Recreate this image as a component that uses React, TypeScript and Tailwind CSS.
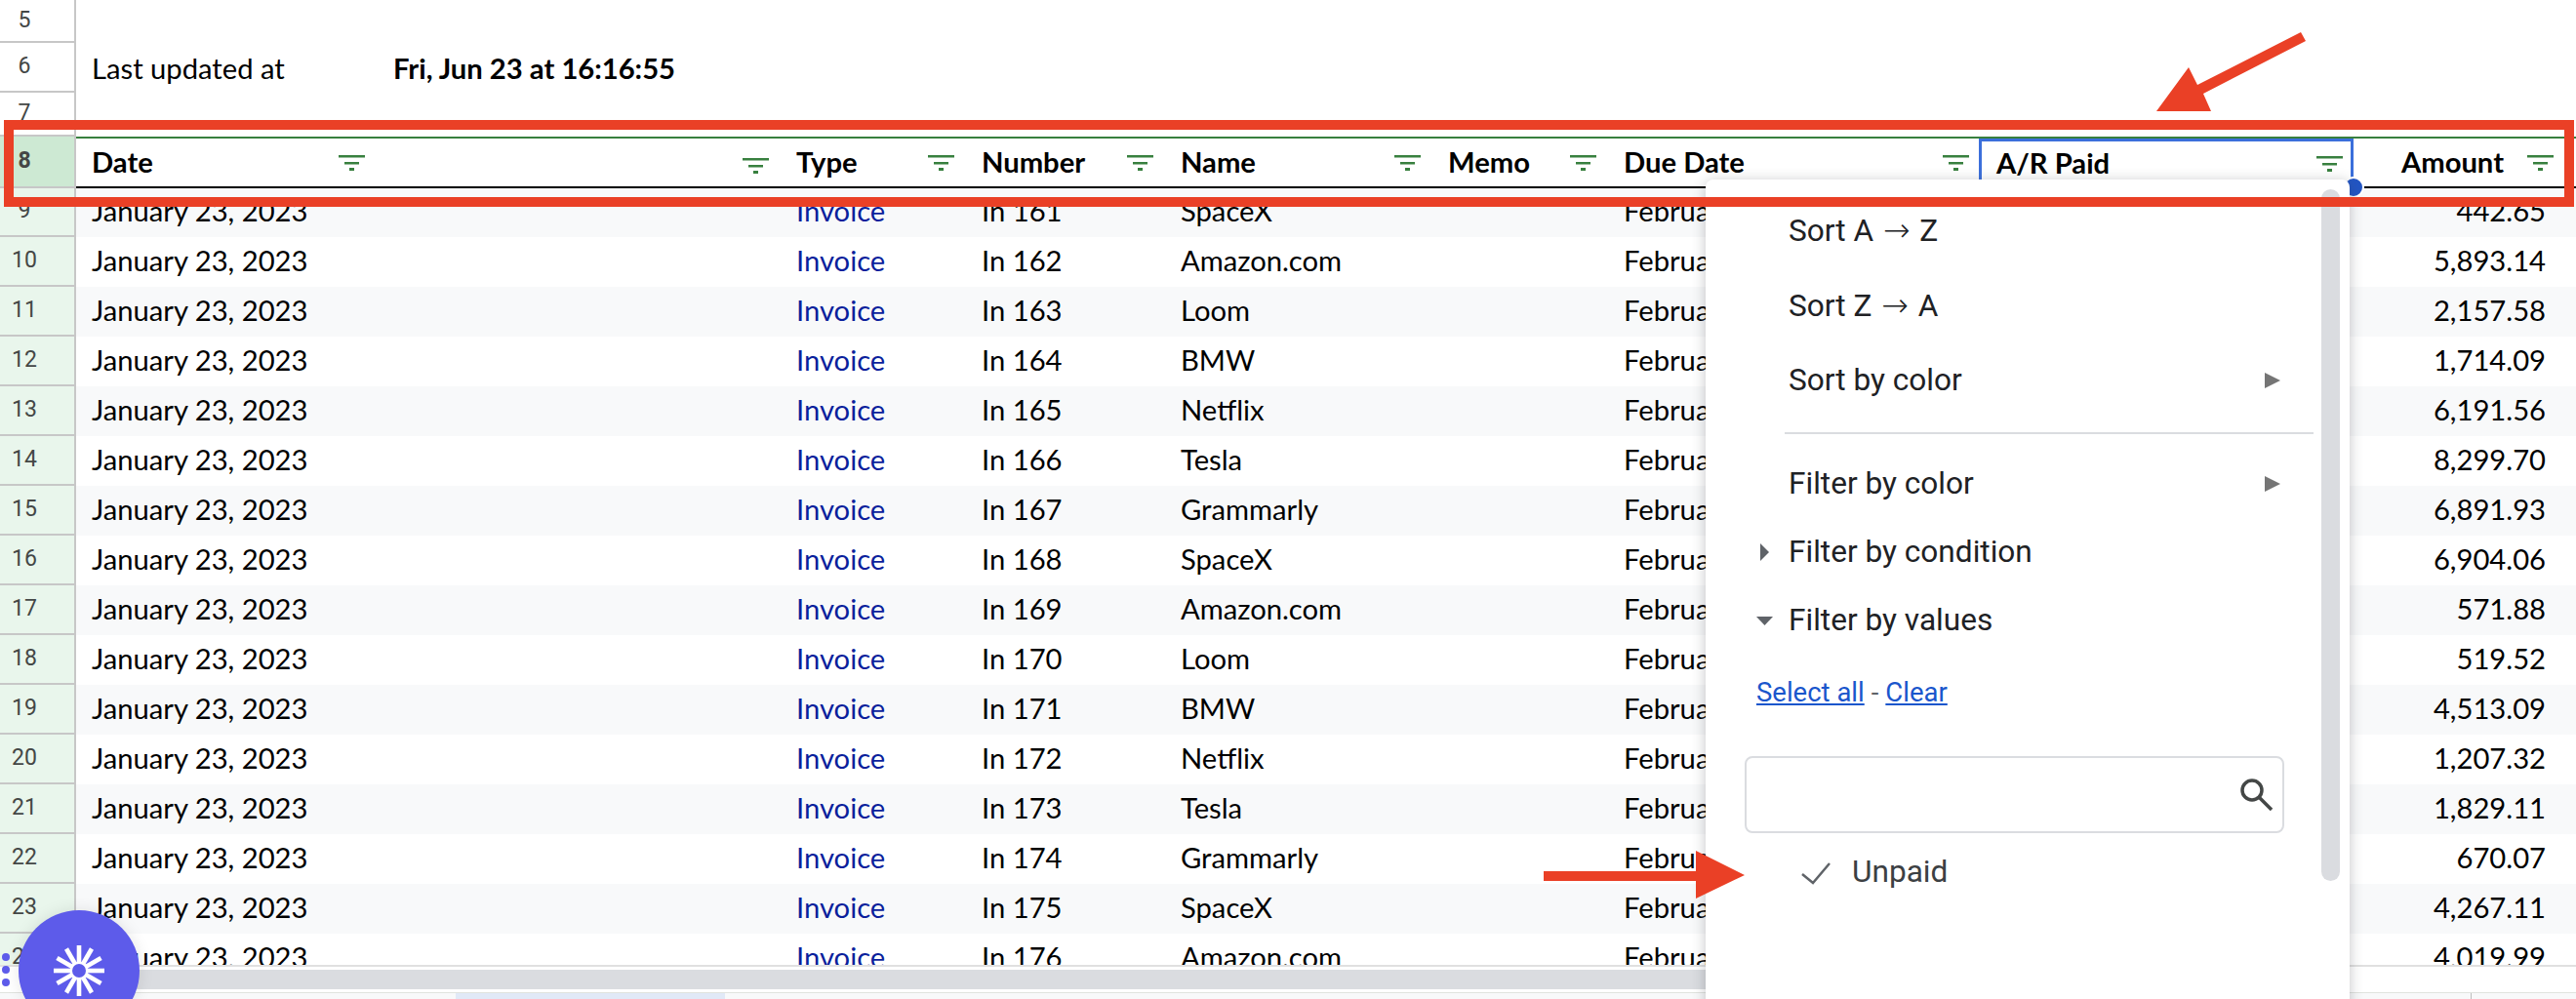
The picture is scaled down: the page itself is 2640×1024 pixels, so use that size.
const cols = "grid grid-cols-[78px_306px_414px_190px_204px_274px_180px_382px_384px_216px_12px]";

const names = ["SpaceX", "Amazon.com", "Loom", "BMW", "Netflix", "Tesla", "Grammarly"];
const amounts = ["442.65", "5,893.14", "2,157.58", "1,714.09", "6,191.56", "8,299.70", "6,891.93", "6,904.06", "571.88", "519.52", "4,513.09", "1,207.32", "1,829.11", "670.07", "4,267.11", "4,019.99"];

function FilterIcon({ className = "" }: { className?: string }) {
  return (
    <svg width="27" height="16" viewBox="0 0 27 16" className={`shrink-0 ${className}`}>
      <rect x="0" y="0" width="27" height="2.5" fill="#38803f" />
      <rect x="6" y="7" width="15" height="2.5" fill="#38803f" />
      <rect x="11" y="13" width="5" height="3" fill="#38803f" />
    </svg>
  );
}

function RowNum({ n, tone = "plain" }: { n: number; tone?: "plain" | "active" | "current" }) {
  const toneClass = tone === "current" ? "bg-[#cde9d3] font-bold" : tone === "active" ? "bg-[#e9f6ec]" : "bg-white";
  return (
    <div
      className={`flex h-full items-center justify-center border-r-2 border-b-2 border-[#c7c7c7] pr-[26px] font-[Roboto,sans-serif] text-[23px] text-[#444746] ${toneClass}`}
    >
      {n}
    </div>
  );
}

function TopRow({ n, h, children }: { n: number; h: string; children?: React.ReactNode }) {
  return (
    <div className={`${cols} ${h} bg-white`}>
      <RowNum n={n} />
      {children}
    </div>
  );
}

function HeaderCell({ label, pad = "pl-[18px]" }: { label?: string; pad?: string }) {
  return (
    <div className={`flex items-center justify-between border-t-2 border-b-2 border-t-[#38803f] border-b-black pr-[10px] ${pad}`}>
      <span className="-mt-[2px] font-bold">{label}</span>
      <FilterIcon />
    </div>
  );
}

function DataRow({ i }: { i: number }) {
  const n = 9 + i;
  return (
    <div className={`${cols} h-[51px] items-stretch ${i % 2 === 0 ? "bg-[#f8f9fa]" : "bg-white"}`}>
      <RowNum n={n} tone="active" />
      <div className="flex items-center pb-[3px] pl-[16px]">January 23, 2023</div>
      <div />
      <div className="flex items-center pb-[3px] pl-[18px] text-[#0b1f9c]">Invoice</div>
      <div className="flex items-center pb-[3px] pl-[18px]">In {161 + i}</div>
      <div className="flex items-center pb-[3px] pl-[18px]">{names[i % 7]}</div>
      <div />
      <div className="flex items-center pb-[3px] pl-[18px] whitespace-nowrap">February 22, 2023</div>
      <div />
      <div className="flex items-center justify-end pb-[3px] pr-[19px]">{amounts[i]}</div>
      <div />
    </div>
  );
}

function MenuItem({ label, arrow, tri }: { label: React.ReactNode; arrow?: boolean; tri?: "right" | "down" }) {
  return (
    <div className="relative flex h-full items-center pl-[85px] pr-[71px]">
      {tri === "right" && (
        <svg width="9" height="18" viewBox="0 0 9 18" className="absolute left-[56px]">
          <path d="M0 0L9 9L0 18Z" fill="#5f6368" />
        </svg>
      )}
      {tri === "down" && (
        <svg width="17" height="9" viewBox="0 0 17 9" className="absolute left-[52px]">
          <path d="M0 0H17L8.5 9Z" fill="#5f6368" />
        </svg>
      )}
      <span className="flex-1">{label}</span>
      {arrow && (
        <svg width="16" height="16" viewBox="0 0 16 16">
          <path d="M0 0L16 8L0 16Z" fill="#757575" />
        </svg>
      )}
    </div>
  );
}

function Arrow() {
  return <span className="px-[2px] font-['DejaVu_Sans',sans-serif] text-[33px] font-extralight">→</span>;
}

function FilterMenu() {
  return (
    <div className="absolute left-[1748px] top-[184px] z-20 h-[880px] w-[660px] rounded-[8px] bg-white pt-[13px] font-[Roboto,sans-serif] text-[31.6px] text-[#202124] shadow-[0_2px_14px_rgba(60,64,67,0.3)]">
      <div className="absolute right-[10px] top-[10px] h-[709px] w-[19px] rounded-full bg-[#dadce0]" />
      <div className="h-[77px]"><MenuItem label={<>Sort A <Arrow /> Z</>} /></div>
      <div className="h-[77px]"><MenuItem label={<>Sort Z <Arrow /> A</>} /></div>
      <div className="h-[77px]"><MenuItem label="Sort by color" arrow /></div>
      <div className="ml-[81px] mt-[15px] mr-[37px] h-[2px] bg-[#dadce0]" />
      <div className="mt-[16px] h-[70px]"><MenuItem label="Filter by color" arrow /></div>
      <div className="h-[70px]"><MenuItem label="Filter by condition" tri="right" /></div>
      <div className="h-[70px]"><MenuItem label="Filter by values" tri="down" /></div>
      <div className="ml-[52px] mt-[24px] flex h-[30px] items-center text-[27.5px] text-[#5f6368]">
        <span className="text-[#1a56cc] underline">Select all</span>
        <span className="px-[7px]">-</span>
        <span className="text-[#1a56cc] underline">Clear</span>
      </div>
      <div className="ml-[40px] mt-[50px] flex h-[79px] w-[553px] items-center justify-end rounded-[8px] border-2 border-[#dadce0] pr-[9px]">
        <svg width="34" height="34" viewBox="0 0 34 34" fill="none" stroke="#444746" strokeWidth="3.5">
          <circle cx="12" cy="12" r="10" />
          <path d="M19.5 19.5L32 32" />
        </svg>
      </div>
      <div className="mt-[14px] flex h-[52px] items-center pl-[98px]">
        <svg width="30" height="23" viewBox="0 0 30 23" fill="none" stroke="#5f6368" strokeWidth="2.5" className="mt-[2px]">
          <path d="M1 12L12 21L29 1" />
        </svg>
        <span className="ml-[22px] text-[#3c4043]">Unpaid</span>
      </div>
    </div>
  );
}

function Logo() {
  const angles = [0, 30, 60, 90, 120, 150];
  return (
    <>
      <div className="absolute left-[19px] top-[933px] z-30 flex h-[124px] w-[124px] items-center justify-center rounded-full bg-[#5d5bea] shadow-[0_0_16px_rgba(0,0,0,0.1)]">
        <svg width="54" height="54" viewBox="-27 -27 54 54">
          {angles.map((a) => (
            <rect key={a} x="-26" y="-2.3" width="52" height="4.6" fill="white" transform={`rotate(${a})`} />
          ))}
          <circle r="9.5" fill="white" />
          <circle r="7" fill="#5d5bea" />
        </svg>
      </div>
      <div className="absolute left-[2px] top-[977px] z-30 flex flex-col gap-[5px]">
        <div className="h-[8px] w-[8px] rounded-full bg-[#5d5bea]" />
        <div className="h-[8px] w-[8px] rounded-full bg-[#5d5bea]" />
        <div className="h-[8px] w-[8px] rounded-full bg-[#5d5bea]" />
      </div>
    </>
  );
}

export default function App() {
  return (
    <div className="relative h-[1024px] w-[2640px] overflow-hidden bg-white font-[Lato,sans-serif] text-[29.2px] text-black">
      <TopRow n={5} h="h-[44px]" />
      <TopRow n={6} h="h-[51px]">
        <div className="flex items-center pl-[16px] pt-[1px]">Last updated at</div>
        <div className="col-span-3 flex items-center pl-[19px] pt-[1px] font-bold">Fri, Jun 23 at 16:16:55</div>
      </TopRow>
      <TopRow n={7} h="h-[45px]" />

      <div className={`${cols} relative z-10 h-[53px] bg-white`}>
        <RowNum n={8} tone="current" />
        <HeaderCell label="Date" pad="pl-[16px]" />
        <div className="flex items-center justify-end border-t-2 border-b-2 border-t-[#38803f] border-b-black pr-[10px]">
          <FilterIcon className="mt-[6px]" />
        </div>
        <HeaderCell label="Type" />
        <HeaderCell label="Number" />
        <HeaderCell label="Name" />
        <HeaderCell label="Memo" />
        <HeaderCell label="Due Date" />
        <div className="border-t-2 border-t-[#38803f]">
          <div className="flex h-[49px] items-center justify-between border-[3px] border-b-0 border-[#3b6fdb] pl-[15px] pr-[8px]">
            <span className="-mt-[3px] font-bold">A/R Paid</span>
            <FilterIcon />
          </div>
        </div>
        <div className="flex items-center justify-end gap-[24px] border-t-2 border-b-2 border-t-[#38803f] border-b-black pr-[11px]">
          <span className="-mt-[2px] font-bold">Amount</span>
          <FilterIcon />
        </div>
        <div className="border-t-2 border-b-2 border-t-[#38803f] border-b-black" />
      </div>

      <div className="-mt-px h-[797px] overflow-hidden">
        {amounts.map((_, i) => (
          <DataRow key={i} i={i} />
        ))}
      </div>

      <div className="h-[2px] bg-[#e0e0e0]" />
      <div className="flex h-[26px] items-center bg-white pl-[76px]">
        <div className="h-[20px] w-[1800px] bg-[#dadce0]" />
      </div>
      <div className="flex h-[7px] border-t border-[#e0e3de] bg-[#f8f9fa] pl-[467px]">
        <div className="h-full w-[276px] bg-[#e1e9f7]" />
        <div className="ml-[1789px] h-full w-[1px] bg-[#bdbdbd]" />
      </div>

      <div className="absolute left-[2401px] top-[181px] z-[15] h-[22px] w-[22px] rounded-full border-2 border-white bg-[#2255c4]" />

      <FilterMenu />

      <div className="pointer-events-none absolute left-[4px] top-[123px] z-30 h-[89px] w-[2634px] border-[10px] border-[#ea4026]" />

      <svg width="170" height="90" viewBox="2200 30 170 90" className="absolute left-[2200px] top-[30px] z-30">
        <path d="M2243 69L2210 114H2266L2258 96L2363 42L2358 33L2252 87Z" fill="#ea4026" />
      </svg>
      <svg width="210" height="50" viewBox="1580 872 210 50" className="absolute left-[1580px] top-[872px] z-30">
        <path d="M1582 893H1738V872L1788 897L1738 921V903H1582Z" fill="#ea4026" />
      </svg>

      <Logo />
    </div>
  );
}
